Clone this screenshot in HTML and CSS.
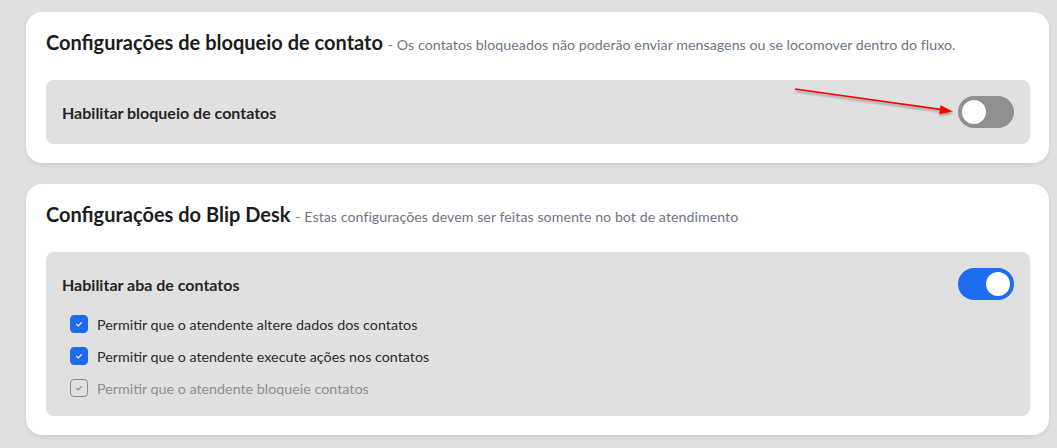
FILE: index.html
```html
<!DOCTYPE html>
<html lang="pt-BR">
<head>
<meta charset="utf-8">
<title>Configurações</title>
<link rel="stylesheet" href="styles.css">
</head>
<body>
<main class="page">
  <section class="card">
    <h2 class="card-title">Configurações de bloqueio de contato <span class="card-sub">- Os contatos bloqueados não poderão enviar mensagens ou se locomover dentro do fluxo.</span></h2>
    <div class="panel">
      <div class="panel-head">
        <span class="panel-label">Habilitar bloqueio de contatos</span>
        <span class="toggle"><span class="knob"></span></span>
      </div>
    </div>
  </section>

  <section class="card">
    <h2 class="card-title">Configurações do Blip Desk <span class="card-sub">- Estas configurações devem ser feitas somente no bot de atendimento</span></h2>
    <div class="panel panel-list">
      <div class="panel-head">
        <span class="panel-label">Habilitar aba de contatos</span>
        <span class="toggle on"><span class="knob"></span></span>
      </div>
      <ul class="checks">
        <li class="check"><span class="box on"><svg viewBox="0 0 18 18" width="18" height="18"><path d="M6.6 9.3 L8.3 10.9 L11.4 7.6" fill="none" stroke="#fff" stroke-width="1.2" stroke-linecap="round" stroke-linejoin="round"/></svg></span>Permitir que o atendente altere dados dos contatos</li>
        <li class="check"><span class="box on"><svg viewBox="0 0 18 18" width="18" height="18"><path d="M6.6 9.3 L8.3 10.9 L11.4 7.6" fill="none" stroke="#fff" stroke-width="1.2" stroke-linecap="round" stroke-linejoin="round"/></svg></span>Permitir que o atendente execute ações nos contatos</li>
        <li class="check disabled"><span class="box"><svg viewBox="0 0 18 18" width="18" height="18"><path d="M6.6 9.3 L8.3 10.9 L11.4 7.6" fill="none" stroke="#8a8a8a" stroke-width="1.1" stroke-linecap="round" stroke-linejoin="round"/></svg></span>Permitir que o atendente bloqueie contatos</li>
      </ul>
    </div>
  </section>
</main>

<svg class="arrow" width="1057" height="448" viewBox="0 0 1057 448">
  <defs>
    <filter id="sh" x="-10%" y="-50%" width="120%" height="200%">
      <feDropShadow dx="0" dy="2" stdDeviation="1.2" flood-color="#000" flood-opacity="0.35"/>
    </filter>
  </defs>
  <g filter="url(#sh)">
    <line x1="795" y1="89" x2="942" y2="109.6" stroke="#ff0000" stroke-width="1.6"/>
    <polygon points="953,111.5 940.5,105.3 939.3,114" fill="#ff0000"/>
  </g>
</svg>
</body>
</html>
```

FILE: styles.css
```css
* { box-sizing: border-box; }

html, body {
  margin: 0;
  height: 100%;
}

body {
  background: #e0e0e0;
  font-family: "Lato", "Noto Sans", sans-serif;
  color: #1f1f1f;
  overflow: hidden;
}

.page {
  padding: 12px 8px 0 26px;
  display: flex;
  flex-direction: column;
  gap: 21px;
}

.card {
  background: #fff;
  border-radius: 16px;
  padding: 16px 19px 19px 20px;
  box-shadow: 0 2px 4px rgba(0, 0, 0, 0.08);
}

.card-title {
  margin: 0 0 24px;
  font-size: 20px;
  line-height: 28px;
  height: 28px;
  font-weight: 700;
  color: #1c1c1e;
  white-space: nowrap;
}

.card-sub {
  font-size: 14.2px;
  line-height: 1;
  font-weight: 400;
  color: #6c7585;
  letter-spacing: 0.05px;
}

.panel {
  background: #e0e0e0;
  border-radius: 8px;
  padding: 16px;
}

.panel-list {
  padding-bottom: 12px;
}

.panel-head {
  display: flex;
  align-items: center;
  justify-content: space-between;
  height: 32px;
}

.panel-label {
  font-size: 16px;
  font-weight: 700;
  color: #262626;
}

.toggle {
  width: 56px;
  height: 32px;
  border-radius: 16px;
  background: #8f8f8f;
  display: flex;
  align-items: center;
  padding: 0 4px;
}

.toggle.on {
  background: #1e6cf0;
  justify-content: flex-end;
}

.knob {
  width: 24px;
  height: 24px;
  border-radius: 50%;
  background: #fff;
}

.checks {
  list-style: none;
  margin: 8px 0 0;
  padding: 0 0 0 8px;
}

.check {
  height: 32px;
  display: flex;
  align-items: center;
  gap: 9px;
  font-size: 14.3px;
  color: #2b2b2b;
}

.check.disabled {
  color: #8e8e8e;
}

.box {
  width: 18px;
  height: 18px;
  border-radius: 4px;
  border: 1px solid #8a8a8a;
  display: flex;
  align-items: center;
  justify-content: center;
  flex: none;
}

.box svg { margin: -1px; }

.box.on {
  background: #1e6cf0;
  border-color: #1e6cf0;
}

.arrow {
  position: absolute;
  left: 0;
  top: 0;
  pointer-events: none;
}
```
